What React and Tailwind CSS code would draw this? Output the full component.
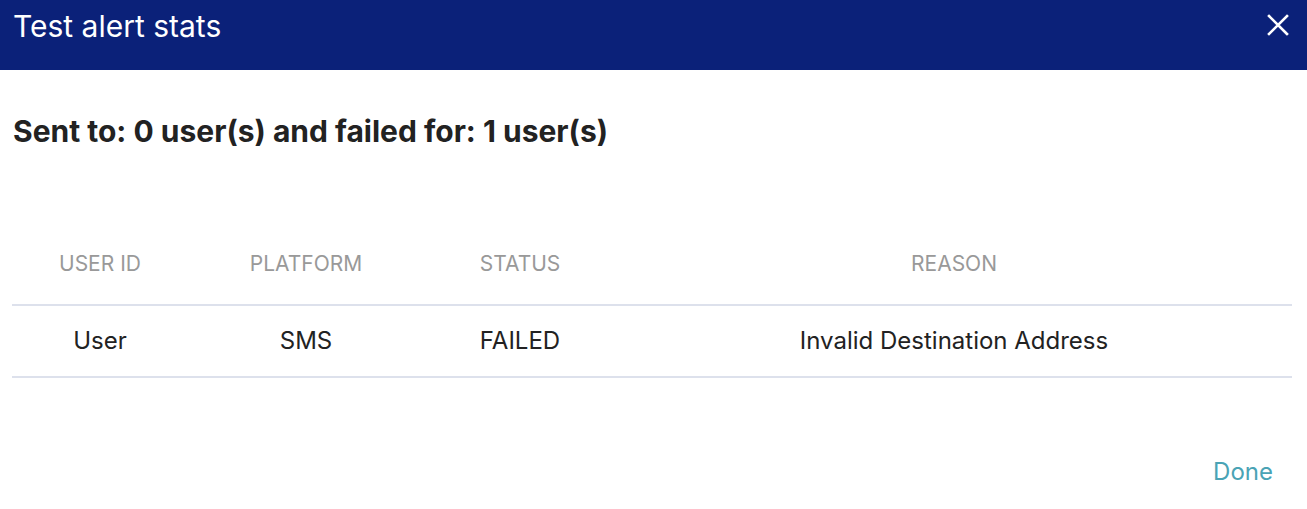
import React from "react";

export default function App() {
  return (
    <div className="w-[1307px] h-[509px] bg-white flex flex-col" style={{ fontFamily: "Inter, 'Noto Sans', sans-serif" }}>
      <div className="h-[70px] bg-[#0b2179] flex items-center justify-between pl-[13px] pr-[18px] pb-[18px]">
        <div className="text-white text-[30px] leading-none">Test alert stats</div>
        <svg width="22" height="22" viewBox="0 0 22 22" className="mb-[2px]">
          <path d="M2 2 L20 20 M20 2 L2 20" stroke="white" strokeWidth="2.6" strokeLinecap="square" />
        </svg>
      </div>
      <div className="px-[12px] pt-[46px]">
        <div className="text-[30px] font-bold text-[#222] leading-none pl-[1px]">Sent to: 0 user(s) and failed for: 1 user(s)</div>
        <table className="mt-[94px] w-[1280px] border-collapse">
          <thead>
            <tr className="h-[65px] border-b-2 border-[#dde1ec]">
              <th className="w-[176px] font-normal text-[21px] text-[#999] text-center pb-[17px]">USER ID</th>
              <th className="w-[236px] font-normal text-[21px] text-[#999] text-center pb-[17px]">PLATFORM</th>
              <th className="w-[192px] font-normal text-[21px] text-[#999] text-center pb-[17px]">STATUS</th>
              <th className="font-normal text-[21px] text-[#999] text-center pb-[17px]">REASON</th>
            </tr>
          </thead>
          <tbody>
            <tr className="h-[72px] border-b-2 border-[#dde1ec]">
              <td className="text-[24px] text-[#222] text-center">User</td>
              <td className="text-[24px] text-[#222] text-center">SMS</td>
              <td className="text-[24px] text-[#222] text-center">FAILED</td>
              <td className="text-[24px] text-[#222] text-center">Invalid Destination Address</td>
            </tr>
          </tbody>
        </table>
        <div className="flex justify-end mt-[82px] pr-[22px]">
          <button className="text-[24px] text-[#4aa3b5] leading-none">Done</button>
        </div>
      </div>
    </div>
  );
}
